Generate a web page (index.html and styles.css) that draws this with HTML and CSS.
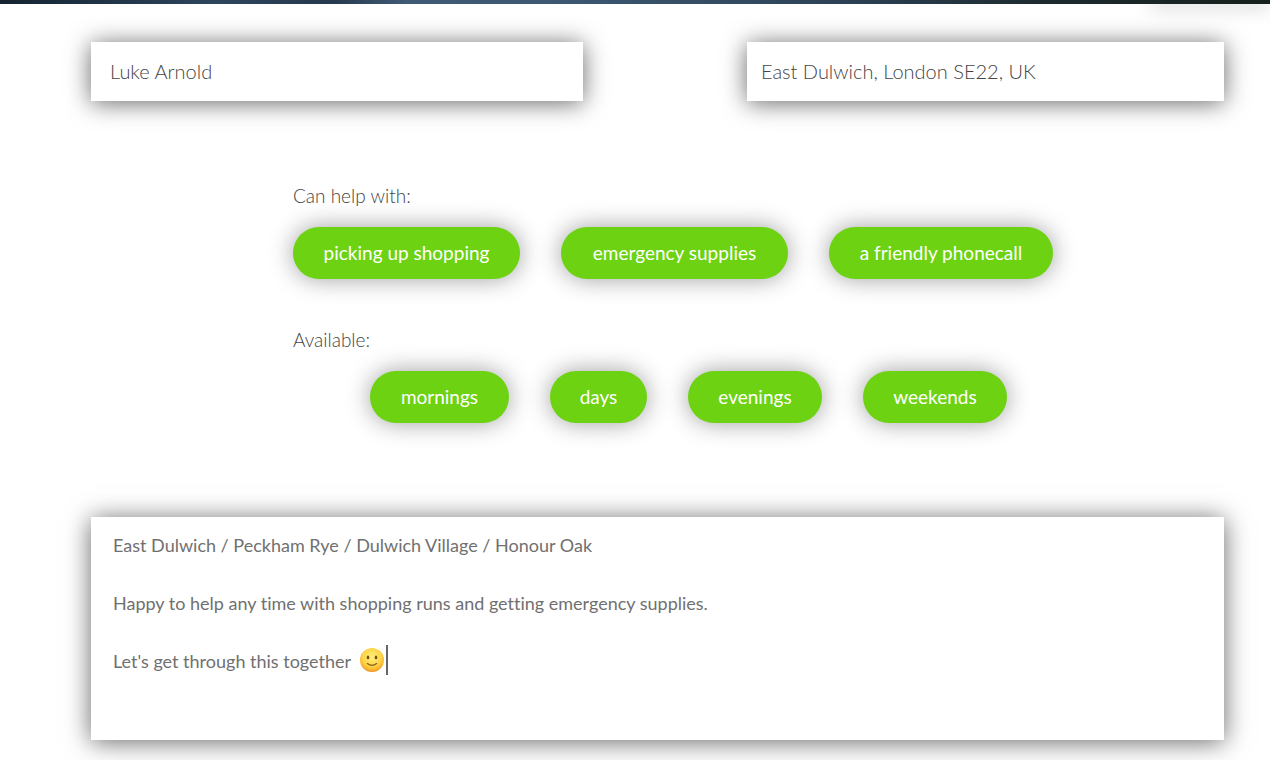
FILE: index.html
```html
<!DOCTYPE html>
<html lang="en">
<head>
<meta charset="utf-8">
<meta name="viewport" content="width=device-width, initial-scale=1">
<title>Volunteer profile</title>
<link rel="stylesheet" href="styles.css">
</head>
<body>
<header class="banner"><div class="banner-tab"></div></header>
<main class="profile">
  <div class="fields">
    <input class="box field field-name" type="text" aria-label="Name" value="Luke Arnold">
    <input class="box field" type="text" aria-label="Location" value="East Dulwich, London SE22, UK">
  </div>
  <div class="options">
    <section class="group">
      <h2 class="label">Can help with:</h2>
      <div class="pills pills-help">
        <button class="pill" type="button">picking up shopping</button>
        <button class="pill" type="button">emergency supplies</button>
        <button class="pill" type="button">a friendly phonecall</button>
      </div>
    </section>
    <section class="group">
      <h2 class="label">Available:</h2>
      <div class="pills pills-times">
        <button class="pill" type="button">mornings</button>
        <button class="pill" type="button">days</button>
        <button class="pill" type="button">evenings</button>
        <button class="pill" type="button">weekends</button>
      </div>
    </section>
  </div>
  <div class="message">
    <textarea class="box message-text" aria-label="Message">East Dulwich / Peckham Rye / Dulwich Village / Honour Oak

Happy to help any time with shopping runs and getting emergency supplies.

Let's get through this together</textarea>
    <div class="message-end">
      <svg class="smile" viewBox="0 0 26 26" role="img" aria-label="Smiling face">
        <defs>
          <radialGradient id="face" cx="50%" cy="38%" r="62%">
            <stop offset="0" stop-color="#fff07a"/>
            <stop offset=".6" stop-color="#fdd54a"/>
            <stop offset=".86" stop-color="#f8b52e"/>
            <stop offset="1" stop-color="#e98f22"/>
          </radialGradient>
        </defs>
        <circle cx="13" cy="13" r="12" fill="url(#face)"/>
        <ellipse cx="9" cy="10.4" rx="1.3" ry="1.9" fill="#7a4d14"/>
        <ellipse cx="17" cy="10.4" rx="1.3" ry="1.9" fill="#7a4d14"/>
        <path d="M8.4 16.6Q13 20 17.6 16.6" fill="none" stroke="#8a5c1c" stroke-width="1.3" stroke-linecap="round"/>
      </svg>
      <span class="caret"></span>
    </div>
  </div>
</main>
</body>
</html>
```
FILE: styles.css
```css
* {
  box-sizing: border-box;
}

body {
  margin: 0;
  background: #fff;
  color: #444;
  font-family: Lato, "Open Sans", sans-serif;
  font-size: 19px;
  font-weight: 300;
  font-variant-ligatures: none;
}

.banner {
  display: flex;
  justify-content: flex-end;
  height: 4px;
  background: linear-gradient(90deg, #14232f 0%, #2e455e 17%, #26394d 26%, #3f5a76 32%, #3b5771 45%, #2e4358 65%, #1d2b30 82%, #16201c 100%);
}

.banner-tab {
  width: 120px;
  height: 4px;
  box-shadow: 0 2px 18px rgba(0, 0, 0, 0.4);
  clip-path: inset(4px -40px -40px -40px);
}

.profile {
  padding: 38px 46px 20px 91px;
}

.box {
  display: block;
  width: 100%;
  margin: 0;
  border: 0;
  border-radius: 0;
  outline: 0;
  background: #fff;
  box-shadow: 0 2px 24px rgba(0, 0, 0, 0.6);
  color: inherit;
  font: inherit;
  font-variant-ligatures: none;
}

.fields {
  display: grid;
  grid-template-columns: 492fr 477fr;
  gap: 164px;
}

.field {
  height: 59px;
  padding: 0 14px 2px;
  font-size: 20px;
}

.field-name {
  padding: 0 19px 2px;
}

.options {
  display: grid;
  gap: 49px;
  width: 760px;
  max-width: 100%;
  margin: 83px auto 94px 202px;
}

.label {
  margin: 0 0 19px;
  font-size: 19px;
  font-weight: 300;
  line-height: 24px;
}

.pills {
  display: grid;
  gap: 41px;
}

.pills-help {
  grid-template-columns: 227fr 227fr 224fr;
}

.pills-times {
  grid-template-columns: 139fr 97fr 134fr 144fr;
  margin: 0 46px 0 77px;
}

.pill {
  height: 52px;
  padding: 0 0 2px;
  border: 0;
  border-radius: 26px;
  background: #6cd211;
  box-shadow: 0 0 24px rgba(0, 0, 0, 0.38);
  color: #fff;
  font: inherit;
  font-weight: 400;
  white-space: nowrap;
}

.message {
  position: relative;
}

.message-text {
  height: 223px;
  padding: 14px 22px;
  resize: none;
  color: #707070;
  font-size: 18px;
  font-weight: 400;
  line-height: 29px;
}

.message-end {
  position: absolute;
  top: 128px;
  left: 268px;
  display: flex;
  align-items: center;
  gap: 1px;
}

.smile {
  width: 26px;
  height: 26px;
}

.caret {
  width: 2px;
  height: 30px;
  background: #666;
}
```
